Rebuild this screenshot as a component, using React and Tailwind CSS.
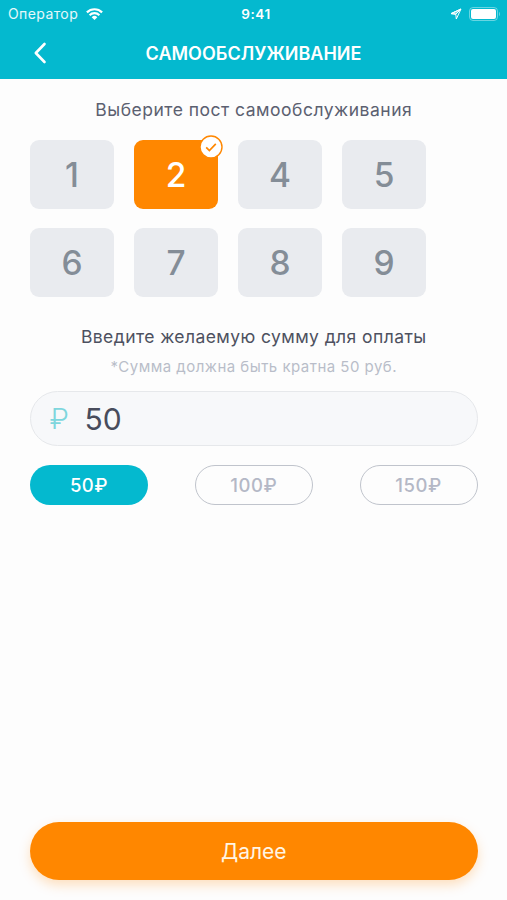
import clsx from 'clsx'

const POSTS = [1, 2, 4, 5, 6, 7, 8, 9]
const AMOUNTS = [50, 100, 150]
const post = 2
const amount = 50

function StatusBar() {
  return (
    <div className="grid h-[27px] grid-cols-3 items-center pl-[8px] pr-[6px] text-white">
      <div className="flex items-center gap-[8px]">
        <span className="text-[14px] leading-none tracking-[0.4px] text-white/90">Оператор</span>
        <svg className="h-[12px] w-[17px]" viewBox="0 0 17 12" fill="none" stroke="currentColor" strokeWidth="2.2">
          <path d="M0.9 4.4a10.8 10.8 0 0 1 15.2 0" />
          <path d="M3.6 7.2a7 7 0 0 1 9.8 0" />
          <path d="M8.5 12L5.7 9.2a4 4 0 0 1 5.6 0z" fill="currentColor" stroke="none" />
        </svg>
      </div>
      <span className="pl-[3px] pt-[2px] text-center text-[13.5px] font-semibold leading-none tracking-[0.6px]">9:41</span>
      <div className="flex items-center justify-end gap-[7px]">
        <svg className="h-[12px] w-[12px]" viewBox="0 0 12 12" fill="none" stroke="currentColor" strokeWidth="1" strokeLinejoin="round">
          <path d="M11 1L1 5.6l4.8.6.5 4.8z" />
          <path d="M11 1L1 5.6l4.8.6z" fill="currentColor" fillOpacity="0.5" />
        </svg>
        <svg className="h-[14px] w-[32px]" viewBox="0 0 32 14">
          <rect x="0.5" y="0.5" width="28" height="13" rx="3.5" fill="none" stroke="#fff" strokeOpacity="0.4" />
          <rect x="2" y="2" width="25" height="10" rx="2" fill="#fff" />
          <path d="M30 4.8c1.4.8 1.4 3.6 0 4.4z" fill="#fff" fillOpacity="0.4" />
        </svg>
      </div>
    </div>
  )
}

function PostTile({ n, selected }) {
  return (
    <button
      className={clsx(
        'relative flex h-[69px] items-center justify-center rounded-[9px] pt-[2px] text-[33.5px] font-medium leading-none',
        selected ? 'bg-[#ff8700] text-white' : 'bg-[#e9ebef] text-[#848d97]',
      )}
    >
      {n}
      {selected && (
        <svg className="absolute -right-[5px] -top-[5px] h-[24px] w-[24px]" viewBox="0 0 24 24" fill="none" stroke="#ff8700">
          <circle cx="12" cy="12" r="11" fill="#fff" strokeWidth="1.4" />
          <path d="M7.2 12.3l3.2 3.2 6.4-6.6" strokeWidth="1.7" />
        </svg>
      )}
    </button>
  )
}

export default function App() {
  return (
    <div className="flex h-[900px] w-[507px] flex-col bg-[#fdfdfd] font-['Inter','Liberation_Sans',sans-serif]">
      <header className="h-[79px] shrink-0 bg-[#04b9cf]">
        <StatusBar />
        <div className="grid h-[52px] grid-cols-[60px_1fr_60px] items-center text-white">
          <svg className="ml-[33px] h-[22px] w-[14px]" viewBox="0 0 14 22" fill="none" stroke="currentColor" strokeWidth="2.6" strokeLinecap="round" strokeLinejoin="round">
            <path d="M11.5 2L2.8 11l8.7 9" />
          </svg>
          <h1 className="pt-[2px] text-center text-[18px] font-semibold leading-none">САМООБСЛУЖИВАНИЕ</h1>
        </div>
      </header>

      <main className="flex grow flex-col pb-[20px] pl-[30px] pr-[29.5px]">
        <h2 className="mt-[19px] text-center text-[17.5px] leading-[24px] tracking-[0.5px] text-[#5b6070]">Выберите пост самообслуживания</h2>
        <div className="mt-[18px] grid w-[396px] grid-cols-4 gap-x-[20px] gap-y-[19px]">
          {POSTS.map((n) => <PostTile key={n} n={n} selected={n === post} />)}
        </div>

        <h2 className="mt-[28px] text-center text-[17.5px] leading-[24px] tracking-[0.42px] text-[#4d5160]">Введите желаемую сумму для оплаты</h2>
        <p className="mt-[8px] text-center text-[15px] leading-[20px] tracking-[0.47px] text-[#b9bdc9]">*Сумма должна быть кратна 50 руб.</p>

        <div className="mt-[14px] flex h-[55px] shrink-0 items-center rounded-full border border-[#e6e8eb] bg-[#f7f8fa] pl-[18.5px]">
          <span className="w-[35px] text-[29px] font-light leading-none text-[#7ed6dd]">₽</span>
          <span className="text-[30px] leading-none text-[#484c5c]">{amount}</span>
        </div>

        <div className="mt-[19px] flex justify-between">
          {AMOUNTS.map((a) => (
            <button
              key={a}
              className={clsx(
                'h-[40px] w-[118px] rounded-full text-[18.5px] font-medium leading-none tracking-[0.5px]',
                a === amount ? 'bg-[#04b9cf] text-white' : 'border-[1.5px] border-[#c0c4cc] text-[#b4b8c6]',
              )}
            >
              {a}₽
            </button>
          ))}
        </div>

        <button className="mt-auto h-[58px] shrink-0 rounded-full bg-[#ff8700] pt-px text-[21px] leading-none text-[#fff5e4] shadow-[0_5px_12px_rgba(255,135,0,0.25)]">Далее</button>
      </main>
    </div>
  )
}
